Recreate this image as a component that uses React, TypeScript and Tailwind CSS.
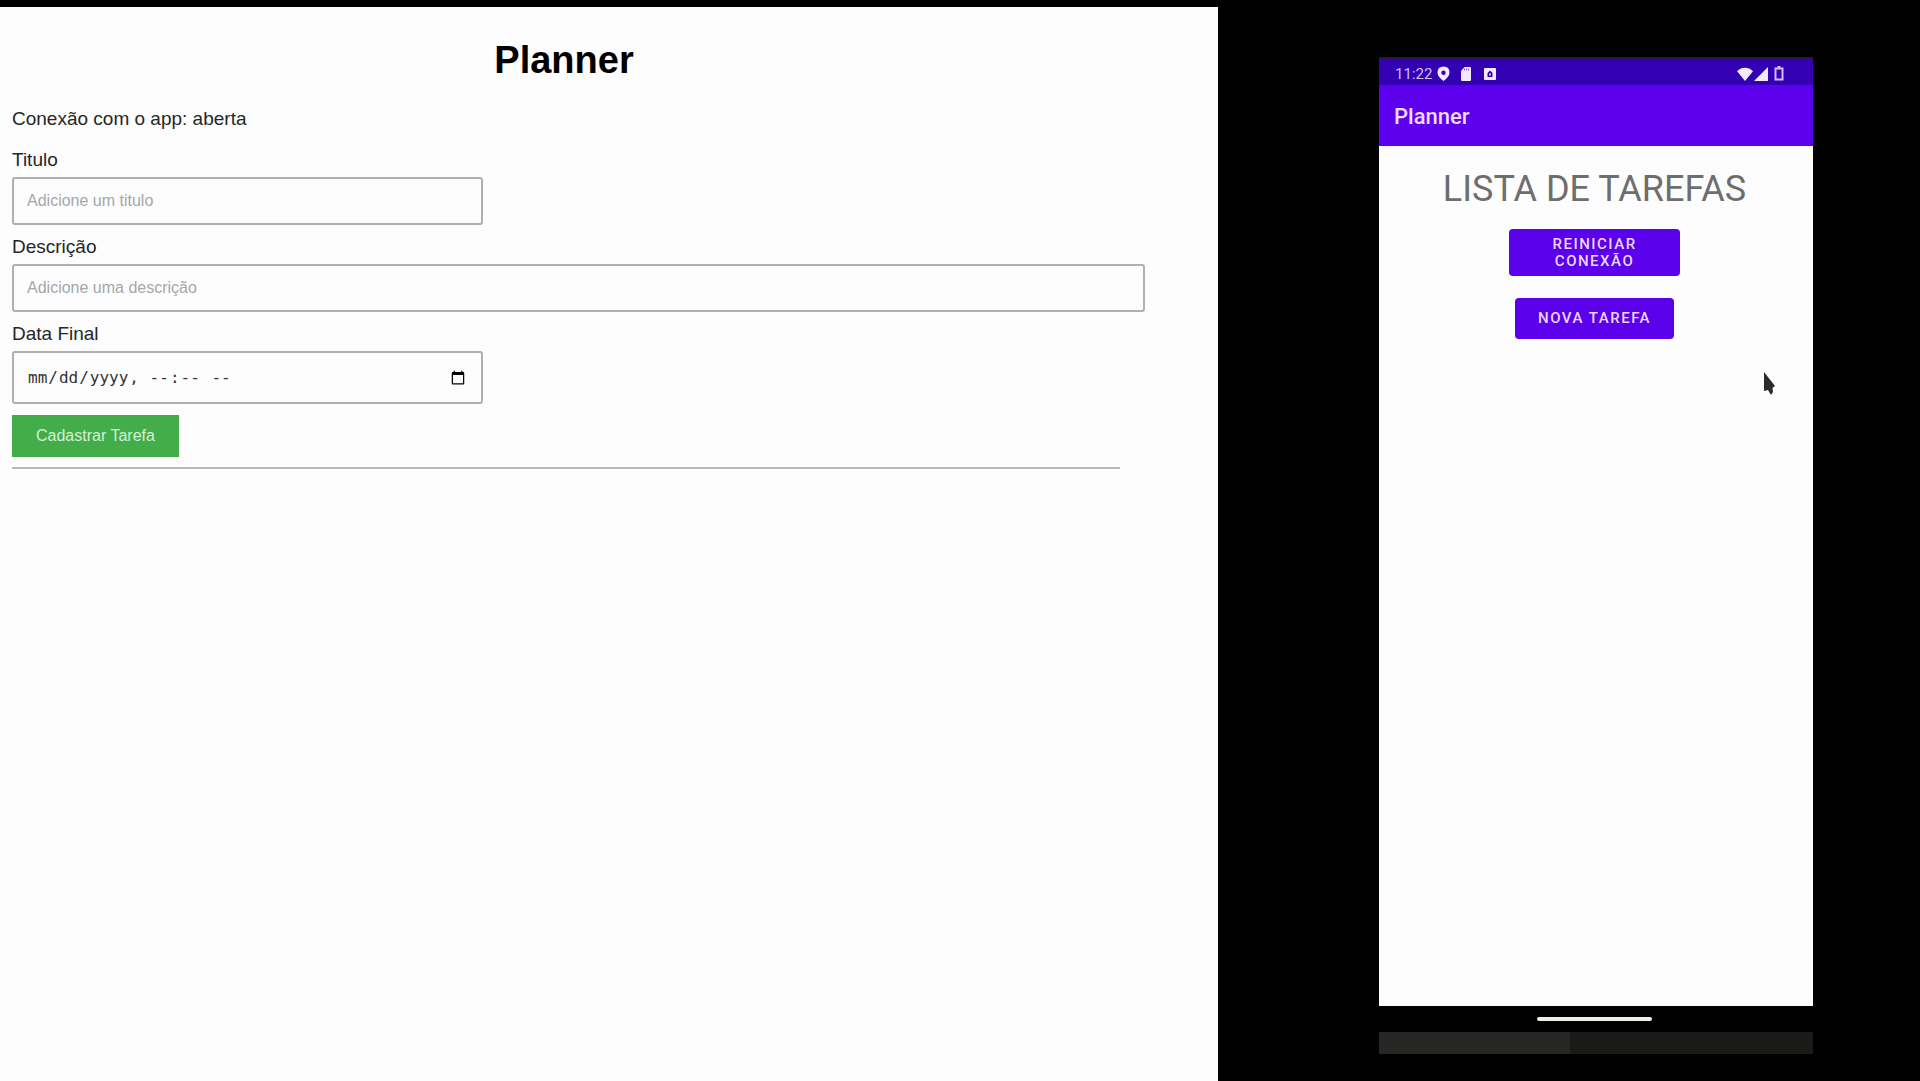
import type { ReactNode } from "react";

const fieldClass =
  "block rounded-[3px] border-2 border-[#b0b0b2] bg-transparent px-[13px] text-base text-[#333] placeholder:text-[#a6a6a8] outline-none";

function Field({ id, label, children }: { id: string; label: string; children: ReactNode }) {
  return (
    <div className="flex flex-col gap-[5px]">
      <label htmlFor={id} className="text-[19px] leading-6">
        {label}
      </label>
      {children}
    </div>
  );
}

function PlannerWeb() {
  return (
    <main className="mt-[7px] w-[63.44%] bg-[#fdfdfe] pl-3 pr-[98px] pt-[31px] font-['Liberation_Sans',Arial,sans-serif] text-[#262626]">
      <h1 className="pr-1 text-center text-[38px] font-bold leading-[44px] text-black">Planner</h1>
      <p className="mt-[25px] text-[19px] leading-6">Conexão com o app: aberta</p>
      <form className="mt-[17px] flex flex-col gap-[10px]" onSubmit={(e) => e.preventDefault()}>
        <Field id="titulo" label="Titulo">
          <input id="titulo" type="text" placeholder="Adicione um titulo" className={`${fieldClass} h-12 w-[471px]`} />
        </Field>
        <Field id="descricao" label="Descrição">
          <input
            id="descricao"
            type="text"
            placeholder="Adicione uma descrição"
            className={`${fieldClass} -mr-[25px] h-12`}
          />
        </Field>
        <Field id="data" label="Data Final">
          <input
            id="data"
            type="datetime-local"
            className={`${fieldClass} h-[53px] w-[471px] font-['DejaVu_Sans_Mono',monospace]`}
          />
        </Field>
        <button type="submit" className="mt-px h-[42px] self-start bg-[#43ad4a] px-6 text-base text-[#d3f0d5]">
          Cadastrar Tarefa
        </button>
        <hr className="border-t-2 border-[#b9b9bb]" />
      </form>
    </main>
  );
}

function StatusBar() {
  return (
    <div className="flex h-7 items-center justify-between border-t-2 border-[#241a4a] bg-[#3400b4] pl-4 pr-[29px] pt-[3px] text-[#f3eaff]">
      <div className="flex items-center">
        <span className="text-[15px] leading-5 text-[#d3bdf6]">11:22</span>
        <svg className="ml-[5px] h-[15px] w-[13px]" viewBox="0 0 13 15" fill="currentColor" aria-hidden="true">
          <path
            fillRule="evenodd"
            d="M6.500.5Q12.500.5 12.500 6.500 12.500 10.500 6.500 15 .5 10.500.5 6.500.5.5 6.500.5ZM6.500 4.500a2.200 2.200 0 1 0 0 4.400 2.200 2.200 0 0 0 0-4.400Z"
          />
        </svg>
        <svg className="ml-[10px] h-[14px] w-3" viewBox="0 0 12 14" fill="currentColor" aria-hidden="true">
          <path d="M4.500 0H10q1 0 1 1v12q0 1-1 1H2q-1 0-1-1V4Z" />
          <path d="M4.500 1.500v2M6.500 1.500v2M8.500 1.500v2" stroke="#8a62dc" />
        </svg>
        <svg className="ml-3 h-3 w-3" viewBox="0 0 12 12" fill="currentColor" aria-hidden="true">
          <path
            fillRule="evenodd"
            d="M1 0h10q1 0 1 1v10q0 1-1 1H1q-1 0-1-1V1Q0 0 1 0ZM6 2.500 3.500 5v4h5V5ZM5.200 5.500h1.600v2H5.200Z"
          />
        </svg>
      </div>
      <div className="flex items-center">
        <svg className="h-[14px] w-4" viewBox="0 0 16 14" fill="currentColor" aria-hidden="true">
          <path d="M8 14 0 4.200Q3.500.8 8 .8t8 3.400Z" />
        </svg>
        <svg className="ml-px h-[14px] w-[14px]" viewBox="0 0 14 14" fill="currentColor" aria-hidden="true">
          <path d="M14 0v14H0Z" />
        </svg>
        <svg className="ml-1.5 h-[15px] w-[10px]" viewBox="0 0 10 15" fill="none" stroke="#d3bdf6" aria-hidden="true">
          <path d="M1.500 2.500h7v11h-7Z" strokeWidth="2" />
          <path d="M3.500 1h3" strokeWidth="2" />
        </svg>
      </div>
    </div>
  );
}

const androidButton =
  "rounded bg-[#5a00ea] text-[15px] font-medium uppercase tracking-widest text-[#eed6ff]";

function Phone() {
  return (
    <section className="mt-[57px] w-[434px] shrink-0 font-[Roboto,sans-serif]">
      <StatusBar />
      <header className="flex h-[61px] items-center bg-[#5c00ee] px-[15px] pt-[2px]">
        <h2 className="text-[22px] font-medium leading-6 text-[#f0dcff]">Planner</h2>
      </header>
      <div className="relative flex h-[860px] flex-col items-center bg-[#fdfdfe] pr-[3px] pt-[21px]">
        <h3 className="text-[36px] leading-[44px] text-[#6e6e6e]">LISTA DE TAREFAS</h3>
        <button type="button" className={`${androidButton} mt-[18px] h-[47px] w-[171px] px-8 leading-[17px]`}>
          Reiniciar Conexão
        </button>
        <button type="button" className={`${androidButton} mt-[22px] h-[41px] w-[159px]`}>
          Nova tarefa
        </button>
        <svg
          className="absolute left-[384px] top-[226px] h-6 w-3"
          viewBox="0 0 12 24"
          fill="#2b2b2b"
          aria-hidden="true"
        >
          <path d="M1 0 12 14 9.500 16 10 20 8 23 5 18 1 19Z" />
        </svg>
      </div>
      <div className="flex h-[26px] items-center justify-center bg-black pr-[3px]">
        <div className="h-1 w-[115px] rounded-full bg-[#efefe6]" />
      </div>
      <div className="flex h-[22px] bg-[#1a1a18]">
        <div className="w-[44%] bg-[#262624]" />
      </div>
    </section>
  );
}

export default function App() {
  return (
    <div className="flex min-h-screen overflow-hidden bg-black">
      <PlannerWeb />
      <div className="flex flex-1 pl-[161px]">
        <Phone />
      </div>
    </div>
  );
}
